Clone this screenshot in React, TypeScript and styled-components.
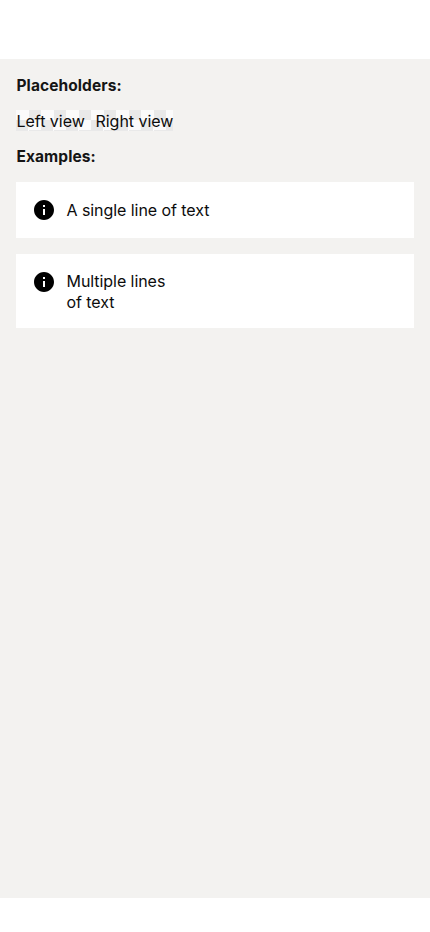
import React from "react";
import styled, { createGlobalStyle } from "styled-components";

const GlobalStyle = createGlobalStyle`
  * { box-sizing: border-box; }
  body { margin: 0; background: #fff; }
`;

const Screen = styled.div`
  height: 932px;
  padding: 59px 0 34px;
  background: #fff;
  font-family: Inter, "Liberation Sans", sans-serif;
  color: #0c0c0c;
`;

const Content = styled.main`
  height: 100%;
  padding: 16px 16px 0;
  background: #f3f2f0;
`;

const Heading = styled.h2`
  margin: 0;
  height: 20px;
  padding-left: 0.5px;
  font-size: 15.5px;
  line-height: 21px;
  font-weight: 700;
  letter-spacing: 0.08px;
  color: #151515;
`;

const Placeholders = styled.div`
  display: flex;
  margin: 15px 0;
  height: 21px;
`;

const Placeholder = styled.span<{ $width: number; $indent: number }>`
  width: ${(p) => p.$width}px;
  height: 21px;
  padding-left: ${(p) => p.$indent}px;
  font-size: 16px;
  line-height: 22px;
  letter-spacing: -0.03px;
  white-space: nowrap;
  background: repeating-conic-gradient(#fbfbfb 0 25%, #e9e9e9 0 50%) 0 10px / 25px 21px;
`;

const Card = styled.section<{ $height: number }>`
  display: flex;
  align-items: flex-start;
  height: ${(p) => p.$height}px;
  margin-top: 16px;
  padding: 16px;
  background: #fff;
`;

const CardList = styled.div`
  margin-top: 16px;
`;

const InfoIcon = styled.svg`
  flex: none;
  width: 24px;
  height: 24px;
  fill: #000;
`;

const CardText = styled.p<{ $top: number }>`
  margin: ${(p) => p.$top}px 0 0 10.5px;
  font-size: 16px;
  line-height: 21px;
  letter-spacing: -0.06px;
`;

const Info = () => (
  <InfoIcon viewBox="0 0 24 24">
    <path d="M12 2C6.48 2 2 6.48 2 12s4.48 10 10 10 10-4.48 10-10S17.52 2 12 2zm1 15h-2v-6h2v6zm0-8h-2V7h2v2z" />
  </InfoIcon>
);

export default function App() {
  return (
    <>
      <GlobalStyle />
      <Screen>
        <Content>
          <Heading>Placeholders:</Heading>
          <Placeholders>
            <Placeholder $width={75} $indent={0.5}>Left view</Placeholder>
            <Placeholder $width={82} $indent={4.5}>Right view</Placeholder>
          </Placeholders>
          <Heading>Examples:</Heading>
          <CardList>
            <Card $height={56}>
              <Info />
              <CardText $top={2}>A single line of text</CardText>
            </Card>
            <Card $height={74}>
              <Info />
              <CardText $top={1}>
                Multiple lines
                <br />
                of text
              </CardText>
            </Card>
          </CardList>
        </Content>
      </Screen>
    </>
  );
}
